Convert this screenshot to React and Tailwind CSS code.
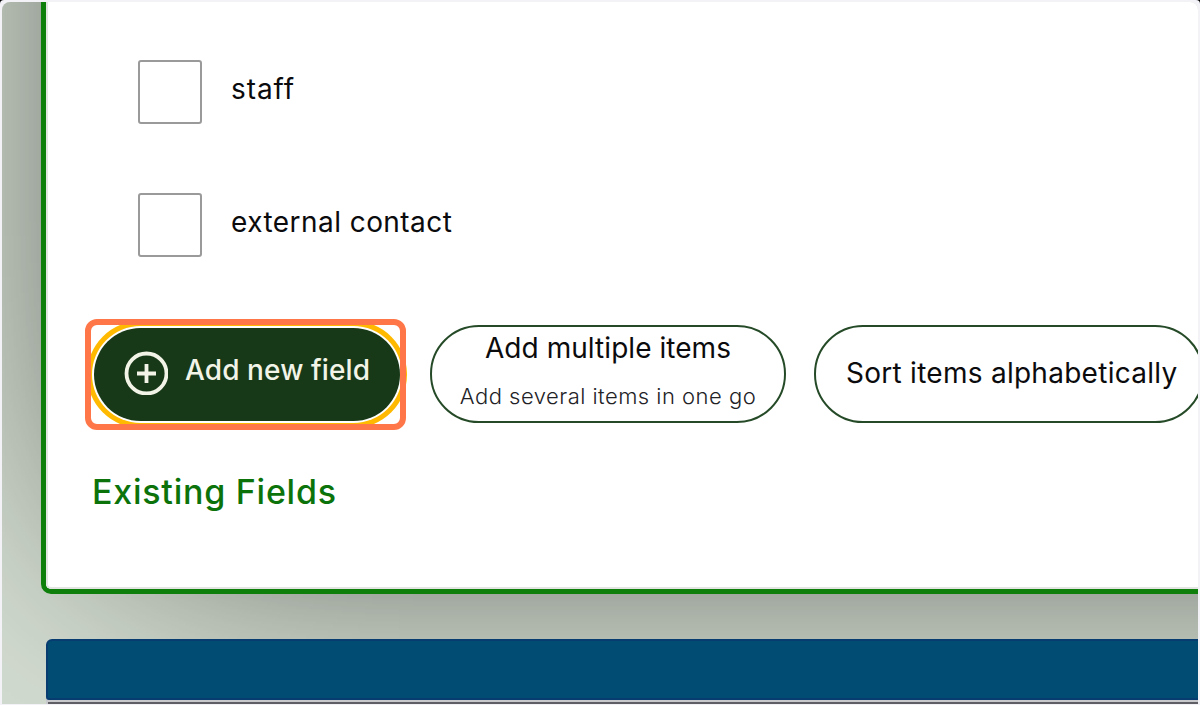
const options = [
  { label: "staff", spacing: "tracking-[0.9px]" },
  { label: "external contact", spacing: "tracking-[0.45px]" },
];

function Option({ label, spacing }) {
  return (
    <label className="flex h-[132.5px] items-start">
      <span className="h-16 w-16 shrink-0 rounded-[3px] border-2 border-[#9a9a9a] bg-white" />
      <span className={`ml-[29px] mt-[11px] text-[28px] leading-9 text-[#0b0b0d] ${spacing}`}>{label}</span>
    </label>
  );
}

function PlusCircle() {
  return (
    <svg className="-mt-[3px] h-11 w-11 shrink-0" viewBox="0 0 44 44" fill="none" stroke="#f3f4e8">
      <circle cx="22.5" cy="22.5" r="20" strokeWidth="3.8" />
      <path d="M22.5 13v19M13 22.5h19" strokeWidth="3.8" />
    </svg>
  );
}

export default function App() {
  return (
    <div className="h-[705px] w-[1200px] bg-black">
      <div className="h-full w-full overflow-hidden rounded-t-[4px] bg-[#f2f2f7] px-[2px] pb-px pt-[2px] font-['Inter','Liberation_Sans',sans-serif]">
        <div className="h-full w-full overflow-hidden rounded-t-[8px] bg-[#d4ddd1]">
          <section className="relative ml-[39px] -mt-[700px] h-[1292px] w-[2000px] rounded-[10px] border-[5px] border-[#0d7f0a] bg-white pl-[46px] pt-[753px] shadow-[0_0_320px_-80px_rgba(0,0,0,0.85)]">
            <div className="absolute inset-0 rounded-[5px] border-b-2 border-l-2 border-[#e3e5e3]" />
            <div className="pl-[46px]">
              {options.map((option) => (
                <Option key={option.label} {...option} />
              ))}
            </div>
            <div className="relative flex h-[98px] items-start">
              <button className="ml-[2px] mt-[3px] flex h-[93px] w-[306px] shrink-0 items-center rounded-full bg-[#183918] pl-[30px] text-[#f3f4e8] shadow-[0_0_0_2px_#ffffff,0_0_0_7px_#ffb900]">
                <PlusCircle />
                <span className="-mt-[10px] ml-[17px] whitespace-nowrap text-[28px] font-medium tracking-[0.1px]">
                  Add new field
                </span>
              </button>
              <div className="absolute -left-[7px] -top-[6px] h-[111px] w-[321px] rounded-[12px] border-[6px] border-[#ff7748]" />
              <button className="ml-[30px] flex h-[98px] w-[356px] shrink-0 flex-col items-center rounded-full border-2 border-[#254a27] pt-[3px]">
                <span className="whitespace-nowrap text-[28px] leading-9 text-[#0b0b0d] tracking-[0.05px]">
                  Add multiple items
                </span>
                <span className="mt-4 whitespace-nowrap text-[22px] font-light leading-7 tracking-[0.48px] text-[#222226]">
                  Add several items in one go
                </span>
              </button>
              <button className="ml-[28px] flex h-[98px] w-[390px] shrink-0 items-center rounded-full border-2 border-[#254a27] pl-[30px] text-[28px] text-[#0b0b0d]">
                <span className="-mt-[2px] whitespace-nowrap tracking-[0.27px]">Sort items alphabetically</span>
              </button>
            </div>
            <h2 className="mt-[47px] text-[34px] font-medium leading-[44px] tracking-[0.75px] text-[#0c730b]">
              Existing Fields
            </h2>
          </section>
          <section className="relative ml-11 mt-[45px] w-[1700px] rounded-[6px] bg-[#c8c9cc]">
            <div className="h-[61px] rounded-b-[3px] rounded-t-[6px] border-2 border-[#063c70] bg-[#004c72]" />
            <div className="ml-[2px] h-[10px] border-b-8 border-[#5e5e64]" />
          </section>
        </div>
      </div>
    </div>
  );
}
